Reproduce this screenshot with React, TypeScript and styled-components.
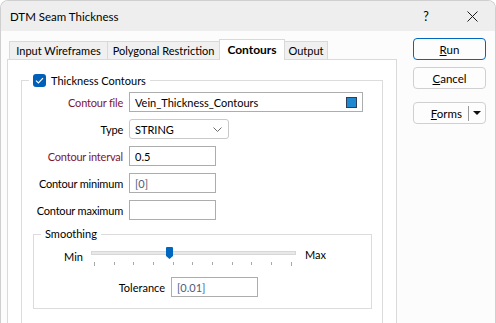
import React from "react";
import styled, { createGlobalStyle } from "styled-components";

const GlobalStyle = createGlobalStyle`
  html, body { margin: 0; padding: 0; overflow: hidden; background: #ffffff; }
  body { font-family: "Lato", "Noto Sans", sans-serif; font-size: 11px; color: #000; }
  * { box-sizing: border-box; }
`;

const Window = styled.div`
  width: 496px;
  height: 323px;
  border: 1px solid #cfcfcf;
  border-bottom: none;
  border-radius: 8px 8px 0 0;
  overflow: hidden;
  background: #fcfcfc;
  display: flex;
  flex-direction: column;
`;

const TitleBar = styled.div`
  height: 30px;
  flex: none;
  background: #eeeeee;
  display: flex;
  align-items: center;
`;

const Title = styled.div`
  flex: 1;
  padding-left: 9px;
  font-size: 11.5px;
  padding-top: 1px;
`;

const CaptionButton = styled.div`
  width: 46px;
  height: 30px;
  display: flex;
  align-items: center;
  justify-content: center;
  font-size: 12.5px;
`;

const Main = styled.div`
  flex: 1;
  display: flex;
  padding: 7px 0 0 6px;
  min-height: 0;
`;

const LeftColumn = styled.div`
  width: 390px;
  display: flex;
  flex-direction: column;
`;

const TabStrip = styled.div`
  display: flex;
  align-items: flex-end;
  height: 21px;
  margin-top: 1px;
  margin-bottom: -1px;
  padding-left: 2px;
  position: relative;
  z-index: 1;
`;

const Tab = styled.div<{ $w: number; $active?: boolean }>`
  width: ${p => p.$w}px;
  height: ${p => (p.$active ? 21 : 18)}px;
  margin-bottom: ${p => (p.$active ? 0 : 1)}px;
  margin-left: -1px;
  &:first-child { margin-left: 0; }
  border: 1px solid #d9d9d9;
  border-bottom: none;
  background: ${p => (p.$active ? "#ffffff" : "#f0f0f0")};
  font-weight: ${p => (p.$active ? 700 : 400)};
  font-size: ${p => (p.$active ? "12px" : "11px")};
  display: flex;
  align-items: center;
  justify-content: center;
  padding-bottom: ${p => (p.$active ? 2 : 0)}px;
  white-space: nowrap;
`;

const Panel = styled.div`
  flex: 1;
  border: 1px solid #dadada;
  border-bottom: none;
  background: #ffffff;
  padding: 14px 13px 0 13px;
`;

const GroupBox = styled.fieldset`
  margin: 0;
  padding: 0;
  border: 1px solid #dcdcdc;
  min-width: 0;
`;

const Legend = styled.legend<{ $offset: number }>`
  margin-left: ${p => p.$offset}px;
  padding: 0 4px;
  height: 13px;
  display: flex;
  align-items: center;
  gap: 5px;
  line-height: 13px;
  white-space: nowrap;
`;

const CheckBox = styled.span`
  width: 13px;
  height: 13px;
  border-radius: 3px;
  background: #005fb8;
  display: inline-flex;
  align-items: center;
  justify-content: center;
`;

const GroupContent = styled.div`
  padding: 5px 10px 40px 11px;
`;

const FormGrid = styled.div`
  display: grid;
  grid-template-columns: 90px 1fr;
  grid-auto-rows: 20px;
  column-gap: 6px;
  row-gap: 7px;
  align-items: center;
`;

const Label = styled.label<{ $required?: boolean }>`
  text-align: right;
  color: ${p => (p.$required ? "#7d1434" : "#000")};
  white-space: nowrap;
  letter-spacing: -0.2px;
`;

const TextBox = styled.div<{ $w: number; $muted?: boolean }>`
  width: ${p => p.$w}px;
  height: 20px;
  border: 1px solid #adadad;
  background: #fff;
  display: flex;
  align-items: center;
  padding: 0 5px;
  color: ${p => (p.$muted ? "#4d5d7c" : "#000")};
`;

const TextValue = styled.span`
  flex: 1;
`;

const ColorSwatch = styled.span`
  width: 11px;
  height: 11px;
  background: #1f88d0;
  border: 1px solid #2b3f58;
`;

const SelectBox = styled.div`
  width: 100px;
  height: 20px;
  border: 1px solid #c9c9c9;
  border-radius: 3px;
  background: #fff;
  display: flex;
  align-items: center;
  padding: 0 6px 0 5px;
`;

const SubGroup = styled(GroupBox)`
  margin-top: 7px;
`;

const SubLegend = styled.legend`
  margin-left: 7px;
  padding: 0 4px;
  height: 14px;
  line-height: 14px;
`;

const SmoothContent = styled.div`
  padding: 5px 0 11px 30px;
`;

const SliderRow = styled.div`
  display: flex;
  align-items: flex-start;
  height: 20px;
`;

const SideLabel = styled.span<{ $top: number; $gap: number }>`
  margin-top: ${p => p.$top}px;
  line-height: 14px;
  margin-left: ${p => p.$gap}px;
`;

const Slider = styled.div`
  position: relative;
  width: 205px;
  height: 20px;
  margin-left: 8px;
`;

const Track = styled.div`
  position: absolute;
  left: 0;
  right: 0;
  top: 5px;
  height: 4px;
  background: #e8e8e8;
  border: 1px solid #d7d7d7;
`;

const Ticks = styled.div`
  position: absolute;
  left: 3px;
  right: 4px;
  top: 16px;
  display: flex;
  justify-content: space-between;
  align-items: flex-start;
`;

const Tick = styled.span<{ $long?: boolean }>`
  width: 1px;
  height: ${p => (p.$long ? 4 : 3)}px;
  background: #a8a8a8;
`;

const Thumb = styled.svg`
  position: absolute;
  left: 75px;
  top: 1px;
`;

const ToleranceRow = styled.div`
  display: flex;
  align-items: center;
  margin-top: 11px;
  gap: 6px;
`;

const ToleranceLabel = styled.span`
  width: 101px;
  text-align: right;
`;

const RightColumn = styled.div`
  margin-left: 16px;
  display: flex;
  flex-direction: column;
  width: 73px;
`;

const Button = styled.div<{ $primary?: boolean; $gapTop: number }>`
  height: 22px;
  margin-top: ${p => p.$gapTop}px;
  border: 1px solid ${p => (p.$primary ? "#0067c0" : "#d0d0d0")};
  border-radius: 4px;
  background: #fdfdfd;
  display: flex;
  align-items: center;
  justify-content: center;
  font-size: 11.5px;
`;

const FormsText = styled.span`
  flex: 1;
  text-align: right;
  padding-right: 6px;
`;

const Divider = styled.span`
  width: 1px;
  height: 15px;
  background: #9a9a9a;
`;

const ArrowPart = styled.span`
  width: 16px;
  display: flex;
  justify-content: center;
  align-items: center;
`;

const Check = () => (
  <svg width="9" height="7" viewBox="0 0 9 7">
    <path d="M1 3.6 L3.4 6 L8 1.2" fill="none" stroke="#fff" strokeWidth="1.2" />
  </svg>
);

const ticks = Array.from({ length: 11 }, (_, i) => i);

export default function App() {
  return (
    <>
      <GlobalStyle />
      <Window>
        <TitleBar>
          <Title>DTM Seam Thickness</Title>
          <CaptionButton>?</CaptionButton>
          <CaptionButton>
            <svg width="11" height="11" viewBox="0 0 11 11">
              <path d="M0.5 0.5 L10.5 10.5 M10.5 0.5 L0.5 10.5" stroke="#1a1a1a" strokeWidth="1" />
            </svg>
          </CaptionButton>
        </TitleBar>
        <Main>
          <LeftColumn>
            <TabStrip>
              <Tab $w={99}>Input Wireframes</Tab>
              <Tab $w={113}>Polygonal Restriction</Tab>
              <Tab $w={66} $active>Contours</Tab>
              <Tab $w={44}>Output</Tab>
            </TabStrip>
            <Panel>
              <GroupBox>
                <Legend $offset={7}>
                  <CheckBox><Check /></CheckBox>
                  Thickness Contours
                </Legend>
                <GroupContent>
                  <FormGrid>
                    <Label $required>Contour file</Label>
                    <TextBox $w={234}>
                      <TextValue>Vein_Thickness_Contours</TextValue>
                      <ColorSwatch />
                    </TextBox>
                    <Label>Type</Label>
                    <SelectBox>
                      <TextValue>STRING</TextValue>
                      <svg width="9" height="5" viewBox="0 0 9 5">
                        <path d="M0.5 0.5 L4.5 4.5 L8.5 0.5" fill="none" stroke="#6a6a6a" strokeWidth="1" />
                      </svg>
                    </SelectBox>
                    <Label $required>Contour interval</Label>
                    <TextBox $w={87}>0.5</TextBox>
                    <Label>Contour minimum</Label>
                    <TextBox $w={87} $muted>[0]</TextBox>
                    <Label>Contour maximum</Label>
                    <TextBox $w={87} />
                  </FormGrid>
                  <SubGroup>
                    <SubLegend>Smoothing</SubLegend>
                    <SmoothContent>
                      <SliderRow>
                        <SideLabel $top={4} $gap={0}>Min</SideLabel>
                        <Slider>
                          <Track />
                          <Ticks>
                            {ticks.map(i => (
                              <Tick key={i} $long={i === 0 || i === ticks.length - 1} />
                            ))}
                          </Ticks>
                          <Thumb width="7" height="12" viewBox="0 0 7 12">
                            <path d="M1 0 H6 Q7 0 7 1 V9 L3.5 12 L0 9 V1 Q0 0 1 0 Z" fill="#0067c0" />
                          </Thumb>
                        </Slider>
                        <SideLabel $top={2} $gap={9}>Max</SideLabel>
                      </SliderRow>
                      <ToleranceRow>
                        <ToleranceLabel>Tolerance</ToleranceLabel>
                        <TextBox $w={87} $muted>[0.01]</TextBox>
                      </ToleranceRow>
                    </SmoothContent>
                  </SubGroup>
                </GroupContent>
              </GroupBox>
            </Panel>
          </LeftColumn>
          <RightColumn>
            <Button $primary $gapTop={0}><span><u>R</u>un</span></Button>
            <Button $gapTop={7}><span><u>C</u>ancel</span></Button>
            <Button $gapTop={13}>
              <FormsText><u>F</u>orms</FormsText>
              <Divider />
              <ArrowPart>
                <svg width="8" height="4" viewBox="0 0 8 4"><path d="M0 0 H8 L4 4 Z" fill="#111" /></svg>
              </ArrowPart>
            </Button>
          </RightColumn>
        </Main>
      </Window>
    </>
  );
}
